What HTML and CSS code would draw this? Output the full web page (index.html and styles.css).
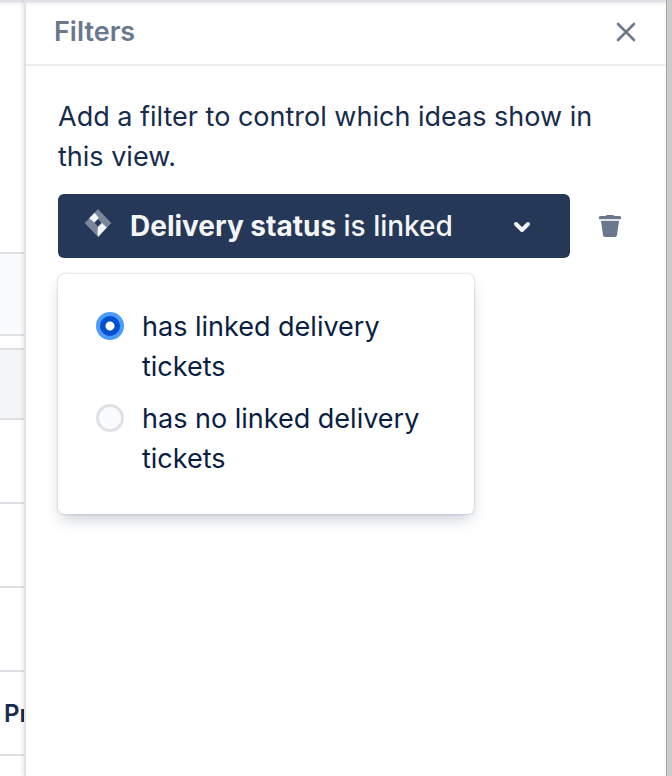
FILE: index.html
```html
<!DOCTYPE html>
<html lang="en">
<head>
    <meta charset="UTF-8">
    <meta name="viewport" content="width=device-width, initial-scale=1.0">
    <title>Filters</title>
    <link rel="stylesheet" href="styles.css">
</head>
<body>
    <div class="app">
        <!-- Visible edge of the ideas table behind the panel -->
        <main class="ideas">
            <div class="row row-top"></div>
            <div class="row row-head"></div>
            <div class="row row-gap"></div>
            <div class="row row-group"></div>
            <div class="row"></div>
            <div class="row"></div>
            <div class="row"></div>
            <div class="row">Pr</div>
            <div class="row row-last"></div>
        </main>

        <aside class="panel">
            <header class="panel-header">
                <h1>Filters</h1>
                <button class="icon-btn" type="button" aria-label="Close">
                    <svg width="24" height="24" viewBox="0 0 24 24" fill="none" stroke="currentColor" stroke-width="2.6" stroke-linecap="round">
                        <path d="M4 4l16 16M20 4L4 20"/>
                    </svg>
                </button>
            </header>

            <div class="panel-body">
                <p class="intro">Add a filter to control which ideas show in this view.</p>

                <div class="filter-row">
                    <button class="filter-btn" type="button" aria-expanded="true">
                        <svg class="logo" width="28" height="30" viewBox="0 0 28 30">
                            <path d="M14 1L27.3 15L14 29L0.7 15Z" fill="#7a869a"/>
                            <path d="M10.5 4.7L14.5 9.5Q14.5 10.5 13.5 11.2L10.5 14.6L5.2 10.2Z" fill="#f4f5f7"/>
                            <path d="M17.8 15L22.8 19.6L14 29Q13 24 14 19Z" fill="#f4f5f7"/>
                            <path d="M14 11.2L17.4 14.8L14 18.4L10.6 14.8Z" fill="#253858"/>
                        </svg>
                        <span class="filter-text"><strong>Delivery status</strong> is linked</span>
                        <svg width="20" height="20" viewBox="0 0 20 20" fill="none" stroke="currentColor" stroke-width="4" stroke-linecap="round" stroke-linejoin="round">
                            <path d="M4 8l6 6l6 -6"/>
                        </svg>
                    </button>
                    <button class="icon-btn" type="button" aria-label="Delete filter">
                        <svg width="24" height="24" viewBox="0 0 24 24" fill="currentColor">
                            <path d="M8 2a1 1 0 0 1 1-1h6a1 1 0 0 1 1 1h5a2 2 0 0 1 2 3H1a2 2 0 0 1 2-3z"/>
                            <path d="M1.6 5h20.800v2H1.6z" opacity="0.2"/>
                            <path d="M3 7h18l-2 14a2 2 0 0 1-2 2H7a2 2 0 0 1-2-2z"/>
                        </svg>
                    </button>
                </div>

                <div class="menu">
                    <label class="option">
                        <input type="radio" name="delivery" checked>
                        <span>has linked delivery tickets</span>
                    </label>
                    <label class="option">
                        <input type="radio" name="delivery">
                        <span>has no linked delivery tickets</span>
                    </label>
                </div>
            </div>
        </aside>
    </div>
</body>
</html>
```
FILE: styles.css
```css
* {
    margin: 0;
    padding: 0;
    box-sizing: border-box;
}

body {
    font-family: Inter, "Liberation Sans", sans-serif;
    font-size: 27px;
    line-height: 40px;
    color: #172b4d;
    background: #fff;
}

button,
input {
    font: inherit;
}

.app {
    display: flex;
    height: 100vh;
    overflow: hidden;
    border-right: 5px solid #cccccc;
    background: linear-gradient(#dfe1e6 0, #dfe1e6 2px, #f4f5f6 3px, #fff 8px);
}

/* Table strip */
.ideas {
    flex: 0 0 24px;
    overflow: hidden;
}

.row {
    height: 84px;
    padding-left: 4px;
    border-bottom: 2px solid #dfe1e6;
    font-size: 24px;
    font-weight: 600;
    line-height: 84px;
    white-space: nowrap;
}

.row-top {
    height: 254px;
}

.row-head {
    height: 82px;
    background: #fafbfc;
}

.row-gap {
    height: 14px;
}

.row-group {
    height: 70px;
    background: #f4f5f7;
}

.row-last {
    border-bottom: none;
}

/* Filters panel */
.panel {
    flex: 1;
    min-width: 0;
    border-left: 2px solid #e1e1e3;
    border-right: 1px solid #a5a5a5;
    box-shadow: -1px 0 4px rgba(0, 0, 0, 0.1);
}

.panel-header {
    display: flex;
    align-items: center;
    justify-content: space-between;
    height: 66px;
    padding: 0 28px;
    border-bottom: 2px solid #ebecf0;
}

.panel-header h1 {
    font-size: 27px;
    font-weight: 600;
    color: #6b778c;
}

.icon-btn {
    display: flex;
    border: none;
    background: none;
    color: #6b778c;
    cursor: pointer;
}

.panel-body {
    padding: 31px 32px;
}

.intro {
    margin-bottom: 17px;
}

.filter-row {
    display: flex;
    align-items: center;
    gap: 28px;
    margin-bottom: 16px;
    padding-right: 12px;
}

.filter-btn {
    display: flex;
    flex: 1;
    align-items: center;
    height: 64px;
    padding: 0 38px 0 26px;
    border: none;
    border-radius: 6px;
    background: #253858;
    color: #f4f5f7;
    font-size: 28px;
    font-weight: 500;
    text-align: left;
    white-space: nowrap;
    cursor: pointer;
}

.filter-text {
    flex: 1;
    margin-left: 18px;
}

.filter-text strong {
    font-weight: 700;
}

.logo {
    margin-bottom: 6px;
}

/* Dropdown menu */
.menu {
    width: 416px;
    max-width: 100%;
    padding: 33px 38px 35px;
    border-radius: 6px;
    background: #fff;
    color: #091e42;
    box-shadow: 0 8px 16px -4px rgba(9, 30, 66, 0.25), 0 0 2px rgba(9, 30, 66, 0.31);
}

.option {
    display: flex;
    gap: 18px;
    cursor: pointer;
}

.option + .option {
    margin-top: 12px;
}

.option input {
    flex: none;
    width: 28px;
    height: 28px;
    margin-top: 5px;
    appearance: none;
    border: 3px solid #dfe1e6;
    border-radius: 50%;
    background: #fafbfc;
}

.option input:checked {
    border: 4px solid #4c9aff;
    background: radial-gradient(circle, #fff 4px, #0052cc 5px);
}
```
